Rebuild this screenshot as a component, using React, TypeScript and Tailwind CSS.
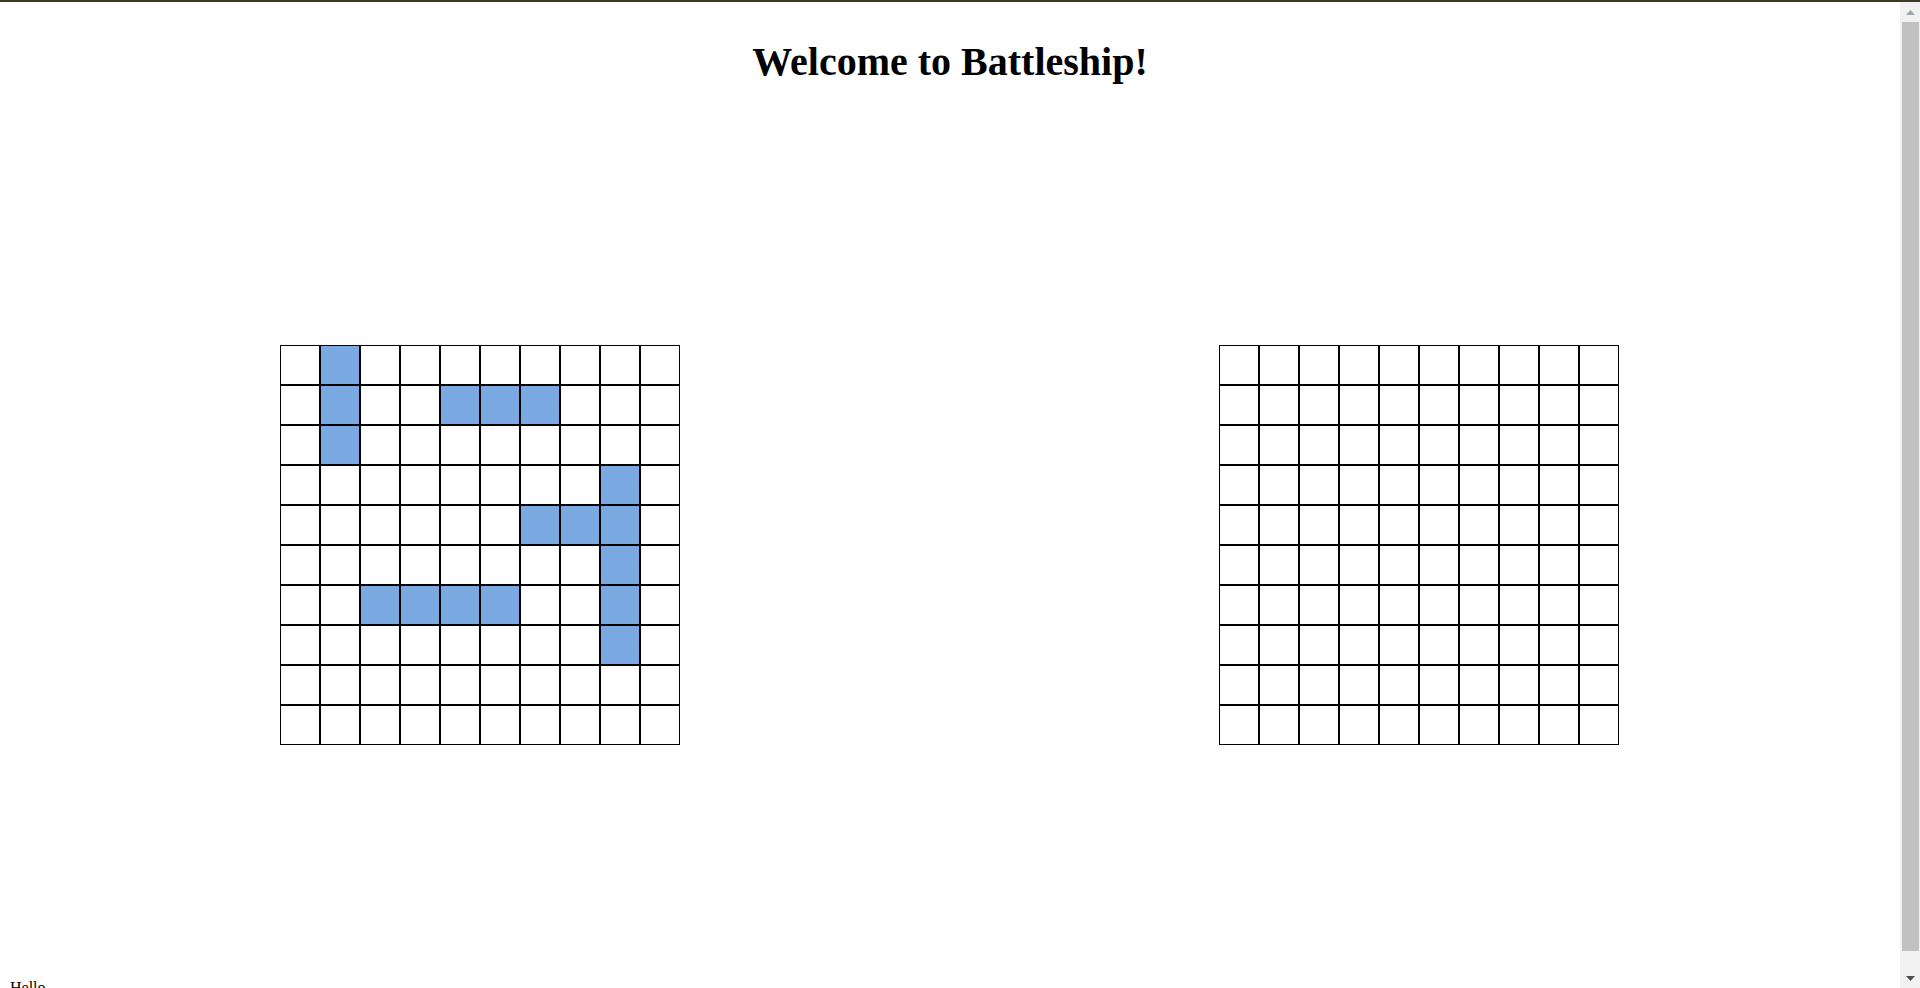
const SHIPS = new Set([
  "0-1", "1-1", "2-1",
  "1-4", "1-5", "1-6",
  "3-8", "4-8", "5-8", "6-8", "7-8",
  "4-6", "4-7",
  "6-2", "6-3", "6-4", "6-5",
]);

function Board({ showShips }: { showShips: boolean }) {
  const rows = Array.from({ length: 10 }, (_, r) => r);
  const cols = Array.from({ length: 10 }, (_, c) => c);

  return (
    <div className="grid grid-cols-[repeat(10,40px)] grid-rows-[repeat(10,40px)] w-[400px] h-[400px]">
      {rows.map((r) =>
        cols.map((c) => {
          const hasShip = showShips && SHIPS.has(`${r}-${c}`);
          return (
            <div
              key={`${r}-${c}`}
              className={
                "w-[40px] h-[40px] border border-black " +
                (hasShip ? "bg-[#7aa8e0]" : "bg-white")
              }
            />
          );
        })
      )}
    </div>
  );
}

// fake browser scrollbar on the right edge
function Scrollbar() {
  return (
    <div className="w-[20px] shrink-0 bg-[#f1f1f1] flex flex-col items-center">
      <div className="h-[20px] w-full flex items-center justify-center">
        <svg width="9" height="5" viewBox="0 0 9 5">
          <path d="M4.5 0 L9 5 L0 5 Z" fill="#a3a3a3" />
        </svg>
      </div>
      <div className="flex-1 w-[17px] bg-[#c1c1c1]" />
      <div className="h-[37px] w-full flex items-end justify-center pb-[7px]">
        <svg width="9" height="5" viewBox="0 0 9 5">
          <path d="M0 0 L9 0 L4.5 5 Z" fill="#505050" />
        </svg>
      </div>
    </div>
  );
}

export default function App() {
  return (
    <div className="h-screen overflow-hidden flex flex-col bg-white text-black font-['Liberation_Serif','Times_New_Roman',serif]">
      <div className="h-[2px] shrink-0 bg-[#3d3920]" />

      <div className="flex flex-1 min-h-0">
        <main className="flex-1 overflow-hidden">
          <h1 className="pt-[37px] text-center text-[40px] leading-[46px] font-bold">
            Welcome to Battleship!
          </h1>

          {/* player board + enemy board */}
          <div className="flex mt-[260px] ml-[280px] gap-[539px]">
            <Board showShips={true} />
            <Board showShips={false} />
          </div>

          <div className="mt-[234px] pl-[10px] pb-[20px] text-[16px] leading-[18px]">Hello</div>
        </main>

        <Scrollbar />
      </div>
    </div>
  );
}
